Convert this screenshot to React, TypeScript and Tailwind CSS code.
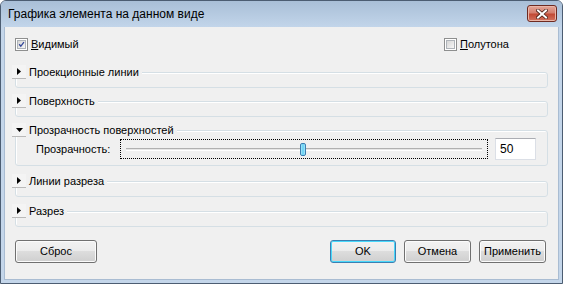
import React from "react";

const font = { fontFamily: '"Liberation Sans", Arial, sans-serif' };

function CheckBox({ checked }: { checked?: boolean }) {
  return (
    <div className="w-[13px] h-[13px] border border-[#8e8f8f] bg-white p-[1px]">
      <div className="relative w-full h-full border border-[#aeb3b9] bg-gradient-to-br from-[#d6d6d6] to-[#f6f6f6]">
        {checked && (
          <svg viewBox="0 0 9 9" className="absolute inset-0 w-full h-full">
            <path d="M1.5 4.2 L3.6 6.8 L7.6 1.4" fill="none" stroke="#34489a" strokeWidth="1.7" />
          </svg>
        )}
      </div>
    </div>
  );
}

function Arrow({ open }: { open?: boolean }) {
  return (
    <div className="relative z-10 w-[14px] h-[14px] bg-[#f4f4f4] border-b border-[#b9b9b9] flex items-center justify-center">
      {open ? (
        <svg width="7" height="4" viewBox="0 0 7 4">
          <path d="M0 0 H7 L3.5 4 Z" fill="#000" />
        </svg>
      ) : (
        <svg width="4" height="7" viewBox="0 0 4 7">
          <path d="M0 0 V7 L4 3.5 Z" fill="#000" />
        </svg>
      )}
    </div>
  );
}

function Section({
  title,
  open,
  className,
  children,
}: {
  title: string;
  open?: boolean;
  className?: string;
  children?: React.ReactNode;
}) {
  return (
    <div className={className}>
      <div className="relative z-10 flex items-center h-[14px]">
        <Arrow open={open} />
        <span className="px-[3px] bg-[#f0f0f0] text-[11px] leading-[14px] text-black">{title}</span>
      </div>
      <div
        className={`-mt-[7px] ml-[3px] border border-[#d5dfe5] rounded-[3px] shadow-[inset_1px_1px_0_#ffffff] ${
          open ? "" : "h-[16px]"
        }`}
      >
        {children}
      </div>
    </div>
  );
}

function Button({ label, primary, className }: { label: string; primary?: boolean; className?: string }) {
  return (
    <div
      className={`h-[23px] rounded-[3px] border ${
        primary ? "border-[#3c7fb1] shadow-[inset_0_0_0_1px_#48d8fb]" : "border-[#707070] shadow-[inset_0_0_0_1px_#fbfbfb]"
      } bg-[linear-gradient(#f2f2f2_0%,#ebebeb_50%,#dddddd_50%,#cfcfcf_100%)] flex items-center justify-center text-[11px] text-black ${className ?? ""}`}
    >
      {label}
    </div>
  );
}

export default function App() {
  return (
    <div className="w-[563px] h-[284px] bg-white" style={font}>
      <div className="w-full h-full border border-[#4c5d72] rounded-t-[6px] bg-[#c4d6ea] flex flex-col overflow-hidden">
        <div className="h-[26px] shrink-0 bg-gradient-to-b from-[#a9bfd7] to-[#c2d5ea] flex items-start justify-between pl-[7px] pr-[5px]">
          <span className="mt-[6px] text-[12px] leading-[15px] text-black">Графика элемента на данном виде</span>
          <div className="mt-[4px] w-[30px] h-[17px] rounded-[3px] border border-[#6e2a21] bg-[linear-gradient(#e4a697_0%,#d47f6f_45%,#c24a35_55%,#d2735f_100%)] shadow-[inset_0_0_0_1px_#eab6a8] flex items-center justify-center">
            <svg width="12" height="10" viewBox="0 0 12 10">
              <path d="M2 1.5 L10 8.5 M10 1.5 L2 8.5" stroke="#4a2018" strokeWidth="3.6" strokeLinecap="square" />
              <path d="M2 1.5 L10 8.5 M10 1.5 L2 8.5" stroke="#ffffff" strokeWidth="2" strokeLinecap="square" />
            </svg>
          </div>
        </div>
        <div className="flex-1 mx-[3px] mb-[3px] bg-[#f0f0f0] border-[#a9bcd2] border-x border-b flex flex-col text-black">
          <div className="mt-[11px] h-[13px] flex items-center justify-between">
            <div className="ml-[10px] flex items-center gap-[3px] text-[11px] leading-[13px]">
              <CheckBox checked />
              <span>
                <span className="underline">В</span>идимый
              </span>
            </div>
            <div className="w-[114px] flex items-center gap-[3px] text-[11px] leading-[13px]">
              <CheckBox />
              <span>
                <span className="underline">П</span>олутона
              </span>
            </div>
          </div>

          <div className="ml-[7px] mr-[10px] flex flex-col">
            <Section title="Проекционные линии" className="mt-[14px]" />
            <Section title="Поверхность" className="mt-[6px]" />
            <Section title="Прозрачность поверхностей" open className="mt-[6px]">
              <div className="pt-[7px] pb-[5px] pl-[20px] pr-[10px] flex items-center">
                <span className="w-[84px] text-[11px]">Прозрачность:</span>
                <div className="w-[368px] h-[20px] border border-dotted border-black flex items-center px-[5px]">
                  <div className="flex-1 h-[3px] border-t border-[#b0b0b0] border-b border-b-white bg-[#e6e6e6] flex items-center">
                    <div className="w-[174px] shrink-0" />
                    <div className="w-[6px] h-[13px] shrink-0 rounded-[2px] border border-[#3c7fb1] bg-gradient-to-r from-[#a8e6f8] via-[#5ed0f4] to-[#a8e6f8]" />
                  </div>
                </div>
                <div className="ml-[7px] w-[41px] h-[22px] bg-white border border-[#dbdfe6] border-t-[#abadb3] flex items-center pl-[4px] text-[12px]">
                  50
                </div>
              </div>
            </Section>
            <Section title="Линии разреза" className="mt-[8px]" />
            <Section title="Разрез" className="mt-[7px]" />
          </div>

          <div className="mt-[13px] flex items-center">
            <Button label="Сброс" className="ml-[10px] w-[82px]" />
            <div className="ml-auto mr-[12px] flex gap-[8px]">
              <Button label="OK" primary className="w-[66px]" />
              <Button label="Отмена" className="w-[67px]" />
              <Button label="Применить" className="w-[67px]" />
            </div>
          </div>
        </div>
      </div>
    </div>
  );
}
